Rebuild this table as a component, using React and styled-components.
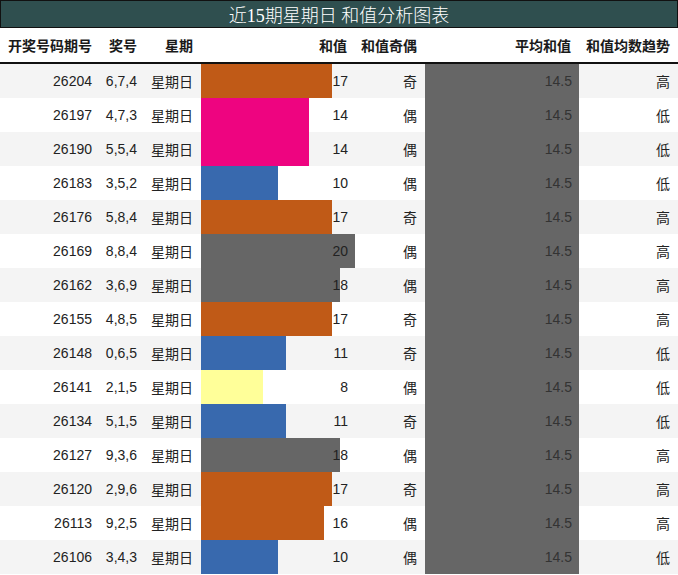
import React from "react";
import styled, { createGlobalStyle } from "styled-components";

const GlobalStyle = createGlobalStyle`
    html, body {
        margin: 0;
        padding: 0;
        background: #ffffff;
    }
    body {
        font-family: "Liberation Sans", "Noto Sans CJK SC", sans-serif;
        color: #222222;
    }
`;

const COLS = "100px 45px 56px 154px 70px 154px 99px";

const Page = styled.div`
    width: 678px;
    height: 575px;
    overflow: hidden;
`;

const TitleBar = styled.div`
    height: 26px;
    background: #2f4f4f;
    border: 1px solid #111;
    color: #ffffff;
    display: flex;
    align-items: center;
    justify-content: center;
    font-family: "Liberation Serif", "Noto Sans CJK SC", serif;
    font-size: 18px;
    font-weight: 300;
`;

const HeaderRow = styled.div`
    display: grid;
    grid-template-columns: ${COLS};
    height: 34px;
    border-bottom: 2px solid #111;
`;

const HeadCell = styled.div`
    display: flex;
    align-items: center;
    justify-content: flex-end;
    padding-right: 8px;
    font-family: "Noto Sans CJK SC", sans-serif;
    font-weight: 700;
    font-size: 14px;
    color: #1a1a1a;
`;

const Row = styled.div`
    display: grid;
    grid-template-columns: ${COLS};
    height: 34px;
    background: ${({ $odd }) => ($odd ? "#ffffff" : "#f4f4f4")};
`;

const Cell = styled.div`
    position: relative;
    display: flex;
    align-items: center;
    justify-content: flex-end;
    padding-right: ${({ $pad }) => $pad ?? 8}px;
    font-size: 14px;
    color: #222;
    font-family: ${({ $cjk }) =>
        $cjk ? '"Noto Sans CJK SC", sans-serif' : '"Liberation Sans", "Noto Sans CJK SC", sans-serif'};
`;

const Bar = styled.div`
    position: absolute;
    left: 0;
    top: 0;
    bottom: 0;
    background: ${({ $color }) => $color};
`;

const Label = styled.span`
    position: relative;
    color: ${({ $dim }) => ($dim ? "#333" : "#222")};
`;

const rows = [
    ["26204", "6,7,4", 17, "奇", "高"],
    ["26197", "4,7,3", 14, "偶", "低"],
    ["26190", "5,5,4", 14, "偶", "低"],
    ["26183", "3,5,2", 10, "偶", "低"],
    ["26176", "5,8,4", 17, "奇", "高"],
    ["26169", "8,8,4", 20, "偶", "高"],
    ["26162", "3,6,9", 18, "偶", "高"],
    ["26155", "4,8,5", 17, "奇", "高"],
    ["26148", "0,6,5", 11, "奇", "低"],
    ["26141", "2,1,5", 8, "偶", "低"],
    ["26134", "5,1,5", 11, "奇", "低"],
    ["26127", "9,3,6", 18, "偶", "高"],
    ["26120", "2,9,6", 17, "奇", "高"],
    ["26113", "9,2,5", 16, "偶", "高"],
    ["26106", "3,4,3", 10, "偶", "低"],
];

function barColor(v) {
    if (v >= 18) return "#666666";
    if (v >= 16) return "#c05a17";
    if (v >= 14) return "#ee0480";
    if (v >= 10) return "#3869ae";
    return "#ffff99";
}

const headers = ["开奖号码期号", "奖号", "星期", "和值", "和值奇偶", "平均和值", "和值均数趋势"];

export default function App() {
    return (
        <Page>
            <GlobalStyle />
            <TitleBar>近15期星期日 和值分析图表</TitleBar>
            <HeaderRow>
                {headers.map((h) => (
                    <HeadCell key={h}>{h}</HeadCell>
                ))}
            </HeaderRow>
            {rows.map(([issue, nums, sum, parity, trend], i) => (
                <Row key={issue} $odd={i % 2 === 1}>
                    <Cell>{issue}</Cell>
                    <Cell>{nums}</Cell>
                    <Cell $cjk>星期日</Cell>
                    <Cell $pad={7}>
                        <Bar $color={barColor(sum)} style={{ width: `${(sum / 20) * 100}%` }} />
                        <Label>{sum}</Label>
                    </Cell>
                    <Cell $cjk>{parity}</Cell>
                    <Cell $pad={7}>
                        <Bar $color="#666666" style={{ width: "100%" }} />
                        <Label $dim>14.5</Label>
                    </Cell>
                    <Cell $cjk>{trend}</Cell>
                </Row>
            ))}
        </Page>
    );
}
